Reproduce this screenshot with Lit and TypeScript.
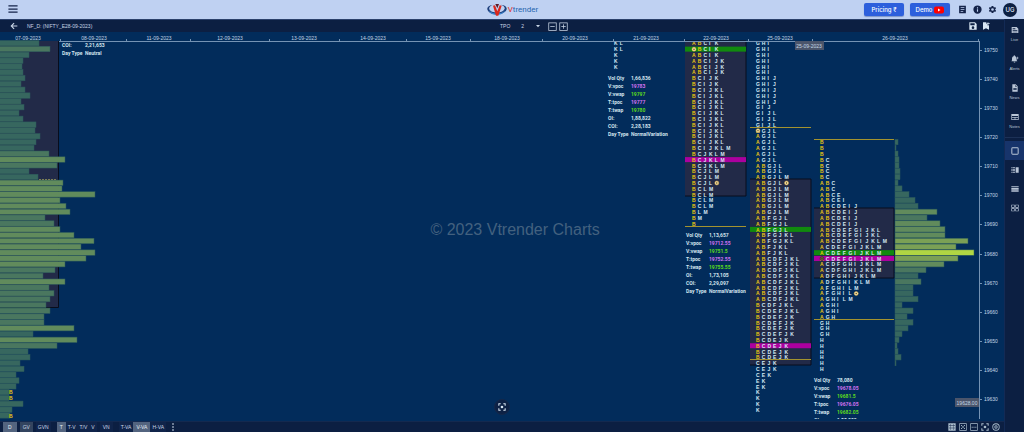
import { LitElement, html, css, svg } from "lit";
import { customElement } from "lit/decorators.js";
import { classMap } from "lit/directives/class-map.js";

// ---- chart scale -------------------------------------------------------
const ROW = 5.816; // height of one two-point price row
const FIRST = 11.4; // centre of the topmost row
const CELL = 5.7; // width of one letter cell
const AXIS = 9.5; // date axis line
const rowY = (i: number) => FIRST + ROW * i;

type Row = [string, number];
interface Session {
  x: number;
  from: number;
  rows: Row[];
  left?: number;
  width?: number;
  area?: [number, number];
  green?: number;
  purple?: number;
  lines?: number[];
  marks?: [number, number, boolean?][];
}

const sessions: Session[] = [
  { x: 614, from: 0, rows: [["KL", 2], ["K", 3]] },
  {
    x: 692, from: 0, left: 685, width: 61, area: [9, 164], green: 1, purple: 20, lines: [194],
    rows: [["ABCIK", 3], ["ABCIJK", 3], ["BCIJK", 2], ["BCIJKL", 10], ["BCIJKLM", 1], ["BCJKLM", 3],
      ["BCJLM", 2], ["BCJL", 1], ["BCLM", 4], ["BLM", 1], ["BM", 1], ["B", 1]],
    marks: [[0, 1], [4, 24]],
  },
  {
    x: 756, from: 0, left: 750, width: 61, area: [147, 333], green: 32, purple: 52, lines: [95, 327],
    rows: [["GHI", 6], ["GHIJ", 5], ["GIJ", 1], ["GIJL", 3], ["AGJL", 6], ["ABGJL", 2], ["ABGJLM", 1],
      ["ABGJL", 1], ["ABGJLM", 5], ["ABFGJL", 3], ["ABFGJKL", 2], ["ABFJKL", 2], ["ABCDFJKL", 8],
      ["BCDFJKL", 1], ["BCDEFJKL", 1], ["BCDEFJK", 4], ["BCDEJK", 4], ["CEJK", 2], ["CEK", 1],
      ["EK", 2], ["K", 4]],
    marks: [[0, 15], [5, 24]],
  },
  {
    x: 820, from: 17, left: 814, width: 80, area: [176, 246], green: 36, purple: 37, lines: [107, 287],
    rows: [["B", 3], ["BC", 4], ["ABC", 2], ["ABCE", 1], ["ABCEI", 1], ["ABCDEIJ", 4], ["ABCDEFGIJKL", 2],
      ["ABCDEFGIJKLM", 1], ["ACDEFGIJKLM", 3], ["ACDFGHIJKLM", 2], ["ADFGHIJKLM", 1], ["ADFGHIKLM", 1],
      ["AFGHILM", 1], ["AFGHIL", 1], ["AGHILM", 1], ["AGHI", 2], ["AGH", 1], ["GH", 3], ["H", 6]],
    marks: [[0, 37, true], [6, 43]],
  },
];

const leftVolume = [40, 51, 30, 24, 23, 24, 26, 22, 26, 31, 22, 25, 20, 24, 37, 36, 41, 37, 35, 50, 66, 58,
  30, 39, 64, 63, 96, 61, 67, 71, 46, 55, 61, 75, 95, 82, 96, 87, 66, 56, 44, 66, 50, 55, 51, 47, 51, 45, 45,
  75, 34, 78, 58, 29, 31, 21, 25, 17, 20, 17, 10, 10, 24, 13, 11];

const rightVolume = [3, 1, 3, 4, 4, 5, 5, 3, 7, 14, 20, 23, 42, 32, 45, 50, 50, 73, 61, 79, 63, 49, 31, 23, 26,
  18, 18, 23, 7, 18, 12, 18, 13, 7, 4, 2, 3, 6, 1];

const dates: [string, number][] = [["07-09-2023", 28], ["08-09-2023", 94], ["11-09-2023", 159],
  ["12-09-2023", 230], ["13-09-2023", 304], ["14-09-2023", 373], ["15-09-2023", 438], ["18-09-2023", 507],
  ["20-09-2023", 575], ["21-09-2023", 646], ["22-09-2023", 716], ["25-09-2023", 780], ["26-09-2023", 895]];
const dateTicks = [60, 126, 190, 269, 339, 406, 470, 542, 613, 684, 748, 812, 978];

const labels = ["Vol Qty", "V:vpoc", "V:vwap", "T:tpoc", "T:twap", "OI:", "COI:", "Day Type"];
const stats: { x: number; y: number; skip: number; values: string[] }[] = [
  { x: 62, y: 13, skip: 6, values: ["2,21,653", "Neutral"] },
  { x: 608, y: 46, skip: 0, values: ["1,66,836", "19783", "19797", "19777", "19780", "1,88,822", "2,28,183", "NormalVariation"] },
  { x: 686, y: 203, skip: 0, values: ["1,13,657", "19712.55", "19751.5", "19752.55", "19755.55", "1,73,105", "2,29,097", "NormalVariation"] },
  { x: 814, y: 348, skip: 0, values: ["78,080", "19678.05", "19681.5", "19676.05", "19682.05", "1,88,022"] },
];

const heat = (t: number) =>
  t < 0.29 ? "v1" : t < 0.405 ? "v2" : t < 0.75 ? "v3" : t < 0.95 ? "v4" : "v5";

const bars = (widths: number[], x: number, from: number, max: number) =>
  widths.map((w, i) => svg`<rect class="bar ${heat(w / max)}" x=${x} y=${rowY(from + i) - ROW / 2}
    width=${w} height=${ROW - 0.4}></rect>`);

const letters = (s: Session) => {
  const expanded = s.rows.flatMap(([t, n]) => Array<string>(n).fill(t));
  return expanded.map((t, i) => {
    const open = (t.match(/^[AB]+/) ?? [""])[0];
    const xs = [...t].map((_, k) => s.x + k * CELL).join(" ");
    return svg`<text class="tpo" x=${xs} y=${rowY(s.from + i) + 2}><tspan class="open">${open}</tspan>${t.slice(open.length)}</text>`;
  });
};

const session = (s: Session) => svg`
  ${s.area ? svg`<rect class="area" x=${s.left!} y=${s.area[0]} width=${s.width!} height=${s.area[1] - s.area[0]}></rect>
    <path class="edge" d="M${s.left} ${s.area[0]}h${s.width}V${s.area[1]}h-${s.width}"></path>` : ""}
  ${s.green !== undefined ? svg`<rect class="green" x=${s.left!} y=${rowY(s.green) - 2.6} width=${s.width!} height="5"></rect>` : ""}
  ${s.purple !== undefined ? svg`<rect class="purple" x=${s.left!} y=${rowY(s.purple) - 2.6} width=${s.width!} height="5"></rect>` : ""}
  ${(s.lines ?? []).map((y) => svg`<rect class="range" x=${s.left!} y=${y} width=${s.width!} height="1"></rect>`)}
  ${letters(s)}
  ${(s.marks ?? []).map(([c, r, dark]) => svg`<circle class=${dark ? "mark dark" : "mark"} cx=${s.x + 2 + c * CELL} cy=${rowY(r)} r="2"></circle>
    <circle class="pupil" cx=${s.x + 2 + c * CELL} cy=${rowY(r)} r="0.7"></circle>`)}`;

// ---- icons -------------------------------------------------------------
const icon = (d: string) => html`<svg class="icon" viewBox="0 0 24 24" aria-hidden="true"><path fill-rule="evenodd" d=${d}></path></svg>`;
const I = {
  menu: "M1 3h22v3H1zM1 10.500h22v3H1zM1 18h22v3H1z",
  article: "M3 2h18v20H3zM7 6v2h10V6zM7 11v2h10v-2zM7 16v2h7v-2z",
  info: "M12 1a11 11 0 1 0 0 22 11 11 0 0 0 0-22zM10.500 6h3v3h-3zM10.500 11h3v7h-3z",
  gear: "M19.100 12.900c.1-.6.1-1.200 0-1.800l2-1.600c.2-.1.2-.4.100-.6l-1.900-3.300c-.1-.2-.4-.3-.6-.2l-2.400 1c-.5-.4-1-.7-1.600-1l-.4-2.500c0-.3-.2-.4-.5-.4h-3.800c-.2 0-.4.2-.5.4l-.4 2.500c-.6.300-1.100.6-1.600 1l-2.400-1c-.2-.1-.5 0-.6.2L2.700 8.900c-.1.2-.1.500.1.600l2 1.600c-.1.600-.1 1.200 0 1.800l-2 1.600c-.2.1-.2.4-.1.600l1.900 3.300c.1.200.4.300.6.200l2.400-1c.5.400 1 .7 1.600 1l.4 2.500c0 .2.200.4.500.4h3.800c.2 0 .4-.2.500-.4l.4-2.500c.6-.3 1.100-.6 1.600-1l2.400 1c.2.1.5 0 .6-.2l1.900-3.300c.1-.2.1-.5-.1-.6zM12 15.600a3.600 3.600 0 1 1 0-7.200 3.600 3.600 0 0 1 0 7.200z",
  back: "M22 10.500H7.500l6-6L11 2 1.500 12 11 22l2.500-2.500-6-6H22z",
  caret: "M4 8h16l-8 9z",
  minus: "M1 1h22v22H1zM3 3v18h18V3zM6 11h12v2H6z",
  plus: "M1 1h22v22H1zM3 3v18h18V3zM6 11h5V6h2v5h5v2h-5v5h-2v-5H6z",
  save: "M1 1h17l5 5v17H1zM4 4v6h13V4zM12 13a4 4 0 1 0 0 8 4 4 0 0 0 0-8z",
  bookmark: "M3 1h10v5h3v4h5v13l-9-4-9 4zM17 1h2v3h4v2h-4v3h-2V6h-3V4h3z",
  live: "M2 3h15l5 5v13H2zM5 7v3h8V7zM5 13v2h14v-2zM5 17v2h14v-2z",
  alert: "M10 1a2 2 0 0 1 2 2v1c4 1 5 4 5 7v5l2 3H1l2-3v-5c0-4 2-6 5-7V3a2 2 0 0 1 2-2zM8 20h5a2.500 2.500 0 0 1-5 0zM18 5h2v3h3v2h-3v3h-2v-3h-3V8h3z",
  news: "M4 1h10l6 6v16H4zM13 3v5h5zM7 12v2h10v-2zM7 16v2h10v-2z",
  notes: "M1 3h22v18H1zM3 9v3h18V9zM3 14v5h8v-5zM13 14v5h8v-5z",
  square: "M5 1h14a4 4 0 0 1 4 4v14a4 4 0 0 1-4 4H5a4 4 0 0 1-4-4V5a4 4 0 0 1 4-4zM4 4v16h16V4z",
  split: "M1 4h4v3H1zM6 4h6v3H6zM1 10h4v4H1zM6 10h6v4H6zM1 17h4v3H1zM6 17h6v3H6zM14 4h9v16h-9z",
  rows: "M1 4h22v3H1zM1 9h22v5H1zM1 16h22v4H1z",
  tiles: "M1 2h10v9H1zM3 4v5h6V4zM13 2h10v9H13zM15 4v5h6V4zM1 13h10v9H1zM3 15v5h6v-5zM13 13h10v9H13zM15 15v5h6v-5z",
  grid: "M1 1h22v22H1zM7 3v4h1V3zM3 7v1h18V7zM3 12v1h18v-1zM3 17v1h18v-1zM7.500 8v4h1V8zM7.500 13v4h1v-4zM7.500 18v3h1v-3zM15 3v4h1V3zM15 8v4h1V8zM15 13v4h1v-4zM15 18v3h1v-3z",
  fit: "M1 1h22v22H1zM3 3v18h18V3zM6 6h4L8.500 7.500 12 11l3.500-3.500L14 6h4v4l-1.500-1.500L13 12l3.500 3.500L18 14v4h-4l1.500-1.500L12 13l-3.500 3.500L10 18H6v-4l1.500 1.500L11 12 7.500 8.500 6 10z",
  range: "M1 1h22v22H1zM3 3v18h18V3zM5 11h3v3H5zM10.500 11h3v3h-3zM16 11h3v3h-3z",
  scan: "M1 1h7v3H4v4H1zM16 1h7v7h-3V4h-4zM1 16h3v4h4v3H1zM20 16h3v7h-7v-3h4zM12 8a4 4 0 1 0 0 8 4 4 0 0 0 0-8z",
  close: "M12 1a11 11 0 1 0 0 22 11 11 0 0 0 0-22zM12 3.500a8.500 8.500 0 1 1 0 17 8.500 8.500 0 0 1 0-17zM12 7a5 5 0 1 0 0 10 5 5 0 0 0 0-10zM12 9.500a2.500 2.500 0 1 1 0 5 2.500 2.500 0 0 1 0-5z",
  dots: "M10 1h4v4h-4zM10 10h4v4h-4zM10 19h4v4h-4z",
};

@customElement("tpo-chart")
class TpoChart extends LitElement {
  static styles = css`
    :host { display: block; position: relative; min-width: 0; min-height: 0; overflow: hidden; background: #022c5b; }
    .plot { display: block; width: 100%; height: calc(100% - 2px); font-family: "Liberation Sans", Arial, sans-serif; font-size: 5px; }
    .anchor { overflow: visible; }
    .axis { fill: #7593b4; }
    .label { fill: #c3d7e6; }
    .mid { text-anchor: middle; }
    .area { fill: #222a48; }
    .edge { fill: none; stroke: #080d1c; stroke-width: 1; }
    .green { fill: #118a0e; }
    .purple { fill: #ac009f; }
    .range { fill: #a3932f; }
    .dash { stroke: #7d7d55; stroke-dasharray: 2 1; }
    .bar { stroke: #2c5a5c; stroke-width: 0.5; }
    .v1 { fill: #37675f; }
    .v2 { fill: #4a775f; }
    .v3 { fill: #618b5c; }
    .v4 { fill: #7ba055; }
    .v5 { fill: #b0d643; }
    .tpo { fill: #d6eaf5; font-weight: 700; }
    .open { fill: #ecc812; }
    .mark { fill: #f8e3a0; stroke: #d8a94a; stroke-width: 0.5; }
    .dark { fill: #6b5a3a; stroke: #2b2b20; }
    .pupil { fill: #4a3c20; }
    .stat { fill: #d3e4ee; font-family: Roboto, sans-serif; font-weight: 700; }
    .pink { fill: #d572f2; }
    .lime { fill: #5ddb1d; }
    .tag { fill: #4b556b; }
    .mist { fill: #43617f; font-size: 16px; text-anchor: middle; }
    .fit { position: absolute; left: 50%; bottom: 6px; width: 16px; height: 16px; margin-left: -8px; padding: 3px;
      border: 1px solid #14284a; border-radius: 50%; background: #0d2145; color: #dbe8f4; box-sizing: border-box; }
    .icon { display: block; width: 100%; height: 100%; fill: currentColor; }
  `;

  render() {
    return html`
      <svg class="plot" role="img" aria-label="TPO market profile">
        <rect class="area" x="0" y="9" width="58" height="266"></rect>
        <path class="edge" d="M58.500 9V275.500H0"></path>
        ${bars(leftVolume, -1, 0, 150)}
        <line class="dash" x1="39" x2="57" y1="147.500" y2="147.500"></line>
        ${[60, 61, 64].map((r) => svg`<text class="tpo" x="9" y=${rowY(r) + 2}><tspan class="open">B</tspan></text>`)}
        ${sessions.map(session)}
        ${bars(rightVolume, 895, 17, 80)}
        ${stats.map((s) => s.values.map((v, i) => {
          const k = s.skip + i;
          const tone = k === 1 || k === 3 ? "stat pink" : k === 2 || k === 4 ? "stat lime" : "stat";
          return svg`<text class="stat" x=${s.x} y=${s.y + 2 + i * 8}>${labels[k]}</text>
            <text class=${tone} x=${s.x + 23} y=${s.y + 2 + i * 8}>${v}</text>`;
        }))}
        <text class="mist" x="51.300%" y="203">© 2023 Vtrender Charts</text>
        <rect class="axis" x="59" y=${AXIS - 0.5} width="920" height="1"></rect>
        ${dateTicks.map((x) => svg`<rect class="axis" x=${x} y="7" width="1" height="2"></rect>`)}
        ${dates.map(([d, x]) => svg`<text class="label mid" x=${x} y="8">${d}</text>`)}
        <rect class="tag" x="795" y="9" width="29" height="9"></rect>
        <text class="label mid" x="809" y="16">25-09-2023</text>
        <svg class="anchor" x="100%">
          <rect class="axis" x="-25" y="9" width="1" height="378"></rect>
          ${Array.from({ length: 13 }, (_, i) => svg`<rect class="axis" x="-25" y=${18 + Math.round(i * ROW * 5)} width="3" height="1"></rect>
            <text class="label" x="-20" y=${20 + Math.round(i * ROW * 5)}>${19750 - i * 10}</text>`)}
          <rect class="tag" x="-49" y="366" width="24" height="9"></rect>
          <text class="label mid" x="-37" y="373">19628.00</text>
        </svg>
      </svg>
      <button class="fit" aria-label="Fit chart">${icon(I.scan)}</button>`;
  }
}

@customElement("app-root")
class AppRoot extends LitElement {
  static styles = css`
    :host { display: grid; grid-template-rows: 19px 1fr; height: 100vh; background: #0c1f42; color: #c9d6e6;
      font-family: "Liberation Sans", Arial, sans-serif; font-size: 5px; line-height: 7px; }
    * { box-sizing: border-box; }
    button, select { margin: 0; padding: 0; border: 0; background: none; color: inherit; font: inherit; }
    .icon { display: block; width: 8px; height: 8px; flex: none; fill: currentColor; }

    .header { display: grid; grid-template-columns: 1fr auto 1fr; align-items: center; padding: 0 7px 0 8px;
      background: #bfd1f2; color: #14234a; }
    .header .icon { width: 10px; height: 10px; }
    .brand { display: flex; align-items: center; gap: 1px; font: 8px/12px Roboto, sans-serif; color: #2565ae; }
    .mark { width: 20px; height: 14px; }
    .vee { color: #e02a20; }
    .tools { display: flex; align-items: center; justify-content: flex-end; gap: 6px; }
    .tools .icon { width: 9px; height: 9px; }
    .pill { display: flex; align-items: center; justify-content: center; gap: 2px; width: 40px; height: 13px; border-radius: 2px; background: #2d5fdc;
      color: #fff; font: 500 6px/8px Inter, sans-serif; box-shadow: 0 1px 1px #7e95c8; }
    .tube { width: 10px; height: 8px; }
    .avatar { width: 14px; height: 14px; border-radius: 50%; background: #0c1f42; color: #e6eefb; font: 500 6px/14px Inter, sans-serif; }
    .set { display: flex; gap: 6px; padding: 0 0 0 2px; }

    .body { display: grid; grid-template-columns: minmax(0, 1fr) 20px; min-height: 0; }
    .main { display: grid; grid-template-rows: 13px minmax(0, 1fr) 11px; min-width: 0; min-height: 0; }
    .toolbar { display: flex; align-items: center; padding: 0 14px 0 10px; background: #0c1f42; border-top: 1px solid #2b416c; }
    .title { display: flex; align-items: center; gap: 9px; width: 50%; }
    .period { display: flex; align-items: center; gap: 3px; }
    .period .icon { width: 9px; height: 9px; }
    .pick { display: flex; align-items: center; gap: 11px; }
    .pick select { appearance: none; width: 14px; }
    .pick .icon { width: 6px; height: 6px; margin-left: -11px; }
    .steps { display: flex; gap: 2px; padding: 0 0 0 4px; }
    .saves { display: flex; gap: 5px; margin-left: auto; color: #d8e6f2; }

    .footer { display: flex; align-items: center; justify-content: space-between; padding: 0 4px 0 3px; border-top: 1px solid #14294f; }
    .modes, .group, .views { display: flex; align-items: center; }
    .modes { gap: 3px; }
    .group { padding: 0 0 0 3px; }
    .mode { height: 10px; padding: 0 2px; line-height: 10px; background: #10244a; }
    .wide { padding: 0 5px; }
    .mid { padding: 0 3px; }
    .on { background: #53647f; color: #e6eef6; }
    .soft { background: #33445f; }
    .views { gap: 3px; color: #a9bccb; }

    .rail { display: flex; flex-direction: column; align-items: stretch; border-left: 1px solid #132a55; color: #b9c5d6; font-size: 4px; line-height: 6px; }
    .rail button { display: flex; flex-direction: column; align-items: center; gap: 3px; }
    .entry { height: 29px; padding: 7px 0 0; }
    .layout { height: 19px; justify-content: center; }
    .layouts { display: flex; flex-direction: column; padding: 3px 0 0; border-top: 1px solid #1c3157; margin-top: 2px; }
    .active { background: #17346b; }
  `;

  mode(text: string, kind: Record<string, boolean> = {}) {
    return html`<button class=${classMap({ mode: true, ...kind })}>${text}</button>`;
  }

  render() {
    return html`
      <header class="header">
        <div><button aria-label="Menu">${icon(I.menu)}</button></div>
        <div class="brand">
          <svg class="mark" viewBox="0 0 60 42" aria-hidden="true">
            <path fill="#1d3f7c" d="M20 5C5 6-2 14 2 22c4 9 17 14 31 12 14-1 25-8 26-16 1-7-7-12-18-13 9 3 13 7 12 12-2 7-11 11-22 12C19 29 9 25 7 19 5 12 10 7 20 5z"></path>
            <path fill="#3b86d0" d="M6 22c7 8 18 11 29 9 9-1 17-5 20-10-2 8-12 14-24 15C19 37 8 31 6 22z"></path>
            <path fill="#d9281e" d="M18 8l6-1 7 18 7-18 6 1-10 30h-7z"></path>
            <path fill="#5a1a2a" d="M25 3h11l-5 13z"></path>
          </svg>
          <span><span class="vee">V</span>trender</span>
        </div>
        <div class="tools">
          <button class="pill">Pricing ₹</button>
          <button class="pill">Demo
            <svg class="tube" viewBox="0 0 20 16" aria-hidden="true"><rect y="1" width="20" height="14" rx="4" fill="#f00"></rect><path fill="#fff" d="M8 5l5 3-5 3z"></path></svg>
          </button>
          <div class="set">
            <button aria-label="Notes">${icon(I.article)}</button>
            <button aria-label="Info">${icon(I.info)}</button>
            <button aria-label="Settings">${icon(I.gear)}</button>
          </div>
          <button class="avatar">UG</button>
        </div>
      </header>
      <div class="body">
        <main class="main">
          <div class="toolbar">
            <div class="title"><button aria-label="Back">${icon(I.back)}</button><span>NF_D: (NIFTY_E28-09-2023)</span></div>
            <div class="period">
              <div class="pick"><label for="tpo">TPO</label><select id="tpo"><option>2</option></select>${icon(I.caret)}</div>
              <div class="steps">
                <button aria-label="Decrease">${icon(I.minus)}</button>
                <button aria-label="Increase">${icon(I.plus)}</button>
              </div>
            </div>
            <div class="saves">
              <button aria-label="Save">${icon(I.save)}</button>
              <button aria-label="Bookmark">${icon(I.bookmark)}</button>
            </div>
          </div>
          <tpo-chart></tpo-chart>
          <footer class="footer">
            <div class="modes">
              ${this.mode("D", { wide: true, on: true })}
              ${this.mode("GV", { mid: true, soft: true })}
              ${this.mode("GVN")}
              <div class="group">${this.mode("T", { mid: true, on: true })}${this.mode("T-V")}${this.mode("T/V")}${this.mode("V")}</div>
              ${this.mode("VN", { mid: true })}
              <div class="group">${this.mode("T-VA")}${this.mode("V-VA", { mid: true, on: true })}${this.mode("H-VA")}</div>
              <button aria-label="More">${icon(I.dots)}</button>
            </div>
            <div class="views">
              <button aria-label="Grid">${icon(I.grid)}</button>
              <button aria-label="Expand">${icon(I.fit)}</button>
              <button aria-label="Range">${icon(I.range)}</button>
              <button aria-label="Focus">${icon(I.scan)}</button>
              <button aria-label="Target">${icon(I.close)}</button>
            </div>
          </footer>
        </main>
        <nav class="rail">
          <button class="entry">${icon(I.live)}Live</button>
          <button class="entry">${icon(I.alert)}Alerts</button>
          <button class="entry">${icon(I.news)}News</button>
          <button class="entry">${icon(I.notes)}Notes</button>
          <div class="layouts">
            <button class="layout active" aria-label="Single">${icon(I.square)}</button>
            <button class="layout" aria-label="Split">${icon(I.split)}</button>
            <button class="layout" aria-label="Rows">${icon(I.rows)}</button>
            <button class="layout" aria-label="Tiles">${icon(I.tiles)}</button>
          </div>
        </nav>
      </div>`;
  }
}
